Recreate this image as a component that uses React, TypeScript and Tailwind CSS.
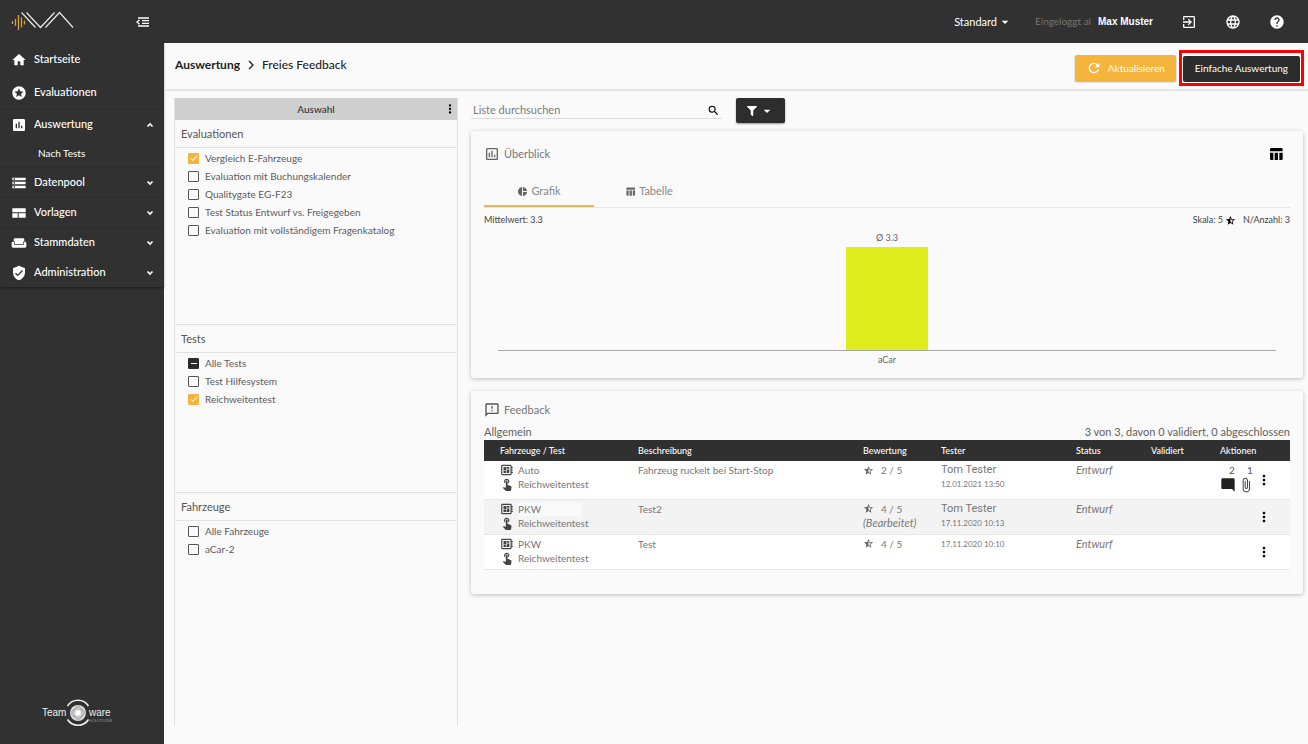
import { useEffect, useRef } from 'react';
import type { ReactNode } from 'react';
import type { IconType } from 'react-icons';
import {
  MdHome,
  MdStars,
  MdAssessment,
  MdStorage,
  MdWeekend,
  MdVerifiedUser,
  MdExitToApp,
  MdLanguage,
  MdHelp,
  MdRefresh,
  MdArrowDropDown,
  MdMoreVert,
  MdSearch,
  MdOutlineAssessment,
  MdPieChart,
  MdTableChart,
  MdOutlineFeedback,
  MdStarHalf,
  MdTouchApp,
  MdDeveloperBoard,
  MdModeComment,
  MdAttachFile,
  MdCheck,
} from 'react-icons/md';
import { FaFilter } from 'react-icons/fa';

type NavEntry = {
  label: string;
  icon: IconType;
  chevron?: 'up' | 'down';
  children?: string[];
};

const navEntries: NavEntry[] = [
  { label: 'Startseite', icon: MdHome },
  { label: 'Evaluationen', icon: MdStars },
  { label: 'Auswertung', icon: MdAssessment, chevron: 'up', children: ['Nach Tests'] },
  { label: 'Datenpool', icon: MdStorage, chevron: 'down' },
  { label: 'Vorlagen', icon: TemplateIcon, chevron: 'down' },
  { label: 'Stammdaten', icon: MdWeekend, chevron: 'down' },
  { label: 'Administration', icon: MdVerifiedUser, chevron: 'down' },
];

type Option = { label: string; state?: 'checked' | 'mixed' };

const evaluations: Option[] = [
  { label: 'Vergleich E-Fahrzeuge', state: 'checked' },
  { label: 'Evaluation mit Buchungskalender' },
  { label: 'Qualitygate EG-F23' },
  { label: 'Test Status Entwurf vs. Freigegeben' },
  { label: 'Evaluation mit vollständigem Fragenkatalog' },
];

const tests: Option[] = [
  { label: 'Alle Tests', state: 'mixed' },
  { label: 'Test Hilfesystem' },
  { label: 'Reichweitentest', state: 'checked' },
];

const vehicles: Option[] = [{ label: 'Alle Fahrzeuge' }, { label: 'aCar-2' }];

const feedback = [
  {
    vehicle: 'Auto',
    test: 'Reichweitentest',
    text: 'Fahrzeug ruckelt bei Start-Stop',
    rating: '2 / 5',
    edited: false,
    tester: 'Tom Tester',
    date: '12.01.2021 13:50',
    status: 'Entwurf',
    comments: 2,
    files: 1,
  },
  {
    vehicle: 'PKW',
    test: 'Reichweitentest',
    text: 'Test2',
    rating: '4 / 5',
    edited: true,
    tester: 'Tom Tester',
    date: '17.11.2020 10:13',
    status: 'Entwurf',
    comments: 0,
    files: 0,
  },
  {
    vehicle: 'PKW',
    test: 'Reichweitentest',
    text: 'Test',
    rating: '4 / 5',
    edited: false,
    tester: '',
    date: '17.11.2020 10:10',
    status: 'Entwurf',
    comments: 0,
    files: 0,
  },
];

function TemplateIcon({ className }: { className?: string }) {
  return (
    <svg viewBox="0 0 24 24" fill="currentColor" className={className}>
      <path d="M2 5h20v6H2zM2 12.500h8v6.500H2zM11.500 12.500H22v6.500H11.500z" />
    </svg>
  );
}

function Chevron({ direction }: { direction: 'up' | 'down' }) {
  return (
    <svg viewBox="0 0 8 6" className="h-[6px] w-2" fill="none" stroke="currentColor" strokeWidth="1.7">
      <path d={direction === 'up' ? 'M1.5 4.5 4 2l2.5 2.5' : 'M1.5 1.5 4 4l2.5-2.5'} />
    </svg>
  );
}

function BrandLogo() {
  return (
    <svg viewBox="0 0 64 22" className="h-[22px] w-16" fill="none" aria-label="IVA">
      <g stroke="#e0a030" strokeWidth="1.3">
        <path d="M1.5 10v3M4.5 8v7M7.5 4v15M10.5 6.500v10M13.500 9.500v4" />
      </g>
      <g stroke="#e8e8e8" strokeWidth="1.2">
        <path d="M10.5 1.500 24.500 16.500" />
        <path d="M15.500 1.500 29.500 16.500 43.500 1.500" />
        <path d="M34.500 16.500 48.500 1.500 62 16.500" />
      </g>
    </svg>
  );
}

function CollapseIcon() {
  return (
    <svg viewBox="0 0 14 10" className="h-[10px] w-[14px]" fill="none" stroke="currentColor" strokeWidth="1.3">
      <path d="M2 1h11M6 3.700h7M6 6.300h7M2 9h11M3.500 3 1 5.100l2.500 2.100" />
    </svg>
  );
}

function VendorLogo() {
  return (
    <svg viewBox="0 0 72 28" className="h-7 w-[72px]" aria-label="Teamware Solutions">
      <g fill="#f0f0f0" fontFamily="'Liberation Sans Narrow', 'Liberation Sans', sans-serif" fontSize="10">
        <text x="0" y="17">Team</text>
        <text x="47" y="17">ware</text>
        <text x="47" y="23" fontSize="4" fill="#9a9a9a">SOLUTIONS</text>
      </g>
      <g fill="none" stroke="#f0f0f0" strokeWidth="1.6">
        <path d="M25.500 7a12.500 12.500 0 0 1 21 0M25.500 20.500a12.500 12.500 0 0 0 21 0" />
      </g>
      <circle cx="36" cy="14" r="8" fill="#dcdcdc" />
      <g fill="none" stroke="#8c8c8c" strokeWidth="0.5">
        <circle cx="36" cy="14" r="5.500" />
        <ellipse cx="36" cy="14" rx="7" ry="4" />
        <ellipse cx="36" cy="14" rx="4" ry="7" />
      </g>
      <circle cx="36" cy="14" r="2.500" fill="#fff" />
    </svg>
  );
}

function Sidebar() {
  return (
    <aside className="flex w-[164px] shrink-0 flex-col bg-[#313131] text-white">
      <div className="flex h-[43px] items-center justify-between pr-[14px] pl-[11px]">
        <BrandLogo />
        <button type="button" aria-label="Menü einklappen">
          <CollapseIcon />
        </button>
      </div>
      <nav className="shadow-[0_1px_2px_rgba(0,0,0,0.4)]">
        {navEntries.map((entry) => (
          <div key={entry.label} className={entry.chevron ? 'border-t border-[#2c2c2c]' : ''}>
            <a
              href="#"
              className={`flex items-center pr-[10px] pl-[11px] text-[11px] font-medium ${entry.chevron ? 'h-[29px]' : 'h-[33px]'}`}
            >
              <entry.icon className="size-4" />
              <span className="ml-[7px] flex-1">{entry.label}</span>
              {entry.chevron && <Chevron direction={entry.chevron} />}
            </a>
            {entry.children?.map((child) => (
              <a key={child} href="#" className="flex h-7 items-center pl-[38px] text-[10px]">
                {child}
              </a>
            ))}
          </div>
        ))}
      </nav>
      <div className="mt-auto flex justify-center pr-2 pb-[17px]">
        <VendorLogo />
      </div>
    </aside>
  );
}

function TopBar() {
  return (
    <header className="flex h-[43px] items-center justify-end bg-[#313131] pr-[23px] text-[11px] text-white">
      <div className="flex items-center">
        <select aria-label="Ansicht" className="field-sizing-content h-5 appearance-none bg-transparent leading-5">
          <option>Standard</option>
        </select>
        <MdArrowDropDown className="size-4" />
      </div>
      <span className="ml-[22px] text-[10px] text-[#757575]">Eingeloggt al</span>
      <span className="ml-[7px] font-['Liberation_Sans'] text-[10px] font-bold">Max Muster</span>
      <button type="button" aria-label="Abmelden" className="ml-7">
        <MdExitToApp className="size-4" />
      </button>
      <button type="button" aria-label="Sprache" className="ml-7">
        <MdLanguage className="size-4" />
      </button>
      <button type="button" aria-label="Hilfe" className="ml-7">
        <MdHelp className="size-4" />
      </button>
    </header>
  );
}

function PageHeader() {
  return (
    <div className="flex h-12 items-center justify-between border-b-2 border-[#e5e5e5] pr-1 pl-[11px]">
      <div className="flex items-center pb-[2px] text-xs text-[#222]">
        <a href="#" className="font-bold">Auswertung</a>
        <svg viewBox="0 0 6 10" className="mx-2 h-[10px] w-[6px]" fill="none" stroke="#222" strokeWidth="1.4">
          <path d="M1 1l4 4-4 4" />
        </svg>
        <span className="font-medium">Freies Feedback</span>
      </div>
      <div className="flex items-center gap-[3px] pt-1">
        <button
          type="button"
          className="flex h-[26px] items-center gap-[6px] rounded-[2px] bg-[#f5b43c] px-[11px] text-[10px] text-white shadow-[0_1px_2px_rgba(0,0,0,0.35)]"
        >
          <MdRefresh className="size-4" />
          Aktualisieren
        </button>
        <div className="border-[3px] border-[#f00] p-px">
          <button type="button" className="h-[26px] rounded-[2px] bg-[#2c2c2c] px-3 text-[10px] text-white">
            Einfache Auswertung
          </button>
        </div>
      </div>
    </div>
  );
}

function CheckRow({ option }: { option: Option }) {
  const ref = useRef<HTMLInputElement>(null);

  useEffect(() => {
    if (ref.current) ref.current.indeterminate = option.state === 'mixed';
  }, [option.state]);

  return (
    <label className="flex h-[18px] items-center gap-[6px] text-[10px] text-[#5c5c5c]">
      <span className="grid size-[11px] place-items-center">
        <input
          ref={ref}
          type="checkbox"
          defaultChecked={option.state === 'checked'}
          className="peer col-start-1 row-start-1 size-[11px] appearance-none rounded-[1px] border border-[#555] checked:border-[#f5b43c] checked:bg-[#f5b43c] indeterminate:border-[#2b2b2b] indeterminate:bg-[#2b2b2b]"
        />
        <MdCheck className="pointer-events-none col-start-1 row-start-1 hidden size-[10px] text-white peer-checked:block" />
        <span className="pointer-events-none col-start-1 row-start-1 hidden h-px w-[6px] bg-white peer-indeterminate:block" />
      </span>
      {option.label}
    </label>
  );
}

function FilterSection({ title, options, className }: { title: string; options: Option[]; className: string }) {
  return (
    <section className={className}>
      <h2 className="h-7 border-b border-[#e2e2e2] px-[6px] text-[11px] leading-[27px] text-[#555]">{title}</h2>
      <div className="px-[13px] pt-px">
        {options.map((option) => (
          <CheckRow key={option.label} option={option} />
        ))}
      </div>
    </section>
  );
}

function SelectionPanel() {
  return (
    <div className="flex w-[284px] shrink-0 flex-col border-x border-[#e2e2e2]">
      <div className="flex h-[22px] items-center bg-[#cfcfcf] text-[10px] text-[#333]">
        <span className="flex-1 pl-[14px] text-center font-medium">Auswahl</span>
        <button type="button" aria-label="Auswahl Optionen" className="text-black">
          <MdMoreVert className="size-[14px]" />
        </button>
      </div>
      <FilterSection title="Evaluationen" options={evaluations} className="h-[204px]" />
      <FilterSection title="Tests" options={tests} className="h-[168px] border-t border-[#e2e2e2]" />
      <FilterSection title="Fahrzeuge" options={vehicles} className="flex-1 border-t border-[#e2e2e2]" />
    </div>
  );
}

function SearchRow() {
  return (
    <div className="flex h-[26px] items-start gap-[14px]">
      <div className="flex h-[21px] w-[251px] items-center border-b border-[#dcdcdc] pt-1 pr-[2px] pl-[2px]">
        <input
          type="text"
          aria-label="Liste durchsuchen"
          placeholder="Liste durchsuchen"
          className="h-4 min-w-0 flex-1 bg-transparent text-[11px] leading-4 outline-none placeholder:text-[#7a7a7a]"
        />
        <MdSearch className="size-[13px] text-black" />
      </div>
      <button
        type="button"
        aria-label="Filter"
        className="flex h-[25px] w-[49px] items-center justify-center gap-[2px] rounded-[2px] bg-[#2d2d2d] text-white shadow-[0_1px_2px_rgba(0,0,0,0.4)]"
      >
        <FaFilter className="size-[10px]" />
        <MdArrowDropDown className="size-4" />
      </button>
    </div>
  );
}

function Card({ children }: { children: ReactNode }) {
  return (
    <section className="rounded-[3px] bg-[#fafafa] px-[13px] shadow-[0_1px_4px_rgba(0,0,0,0.25)]">{children}</section>
  );
}

function OverviewCard() {
  return (
    <Card>
      <div className="flex h-[46px] items-center pr-[6px]">
        <MdOutlineAssessment className="size-4 text-[#666]" />
        <h2 className="ml-1 flex-1 text-[11px] text-[#777]">Überblick</h2>
        <button type="button" aria-label="Spalten" className="text-black">
          <MdTableChart className="size-4" />
        </button>
      </div>
      <div role="tablist" className="flex h-[31px] border-b border-[#e5e5e5] text-[11px] text-[#888]">
        <button
          type="button"
          role="tab"
          aria-selected="true"
          className="flex h-[30px] w-[110px] items-center justify-center gap-[3px] border-b-2 border-[#e5b75c]"
        >
          <MdPieChart className="size-[11px] text-[#666]" />
          Grafik
        </button>
        <button
          type="button"
          role="tab"
          aria-selected="false"
          className="flex h-7 w-[110px] items-center justify-center gap-[3px]"
        >
          <MdTableChart className="size-[11px] text-[#666]" />
          Tabelle
        </button>
      </div>
      <div className="flex h-6 items-center text-[9px] text-[#444]">
        <span className="flex-1">Mittelwert: 3.3</span>
        <span>Skala: 5</span>
        <MdStarHalf className="mr-[7px] ml-[2px] size-[11px] text-black" />
        <span>N/Anzahl: 3</span>
      </div>
      <div className="px-[14px] pb-3 text-[9px] leading-3 text-[#666]">
        <div className="flex h-[119px] flex-col items-center justify-end border-b border-[#aaa]">
          <span className="mb-[3px]">Ø 3.3</span>
          <div className="h-[103px] w-[82px] bg-[#dfed1c]" />
        </div>
        <div className="pt-[3px] text-center">aCar</div>
      </div>
    </Card>
  );
}

function FeedbackCard() {
  return (
    <Card>
      <div className="flex h-9 items-center pt-[2px]">
        <MdOutlineFeedback className="size-4 text-[#555]" />
        <h2 className="ml-1 text-[11px] text-[#777]">Feedback</h2>
      </div>
      <div className="flex h-[13px] items-start justify-between text-[11px] leading-[9px] text-[#5f5f5f]">
        <span>Allgemein</span>
        <span>3 von 3, davon 0 validiert, 0 abgeschlossen</span>
      </div>
      <table className="mb-6 w-full table-fixed text-left text-[10px] leading-[14px] text-[#777]">
        <thead className="bg-[#303030] text-[9px] text-white">
          <tr className="h-[21px]">
            <th className="w-[154px] pl-4 font-medium">Fahrzeuge / Test</th>
            <th className="font-medium">Beschreibung</th>
            <th className="w-[78px] font-medium">Bewertung</th>
            <th className="w-[135px] font-medium">Tester</th>
            <th className="w-[75px] font-medium">Status</th>
            <th className="w-[69px] font-medium">Validiert</th>
            <th className="w-[70px] font-medium">Aktionen</th>
          </tr>
        </thead>
        <tbody>
          {feedback.map((row, index) => (
            <tr
              key={row.date}
              className={`border-b border-[#e6e6e6] align-top ${index === 0 ? 'h-[38px]' : 'h-[35px]'} ${index % 2 ? 'bg-[#f3f3f3]' : 'bg-white'}`}
            >
              <td className="pt-[2px] pl-4">
                <div className="flex items-center gap-1">
                  <MdDeveloperBoard className="size-[14px] text-[#444]" />
                  <span className={index === 1 ? 'w-16 bg-[#f9f9f9]' : ''}>{row.vehicle}</span>
                </div>
                <div className="flex items-center gap-1">
                  <MdTouchApp className="size-[14px] text-[#444]" />
                  {row.test}
                </div>
              </td>
              <td className="pt-[2px]">{row.text}</td>
              <td className="pt-[2px]">
                <div className="flex items-center gap-[7px]">
                  <MdStarHalf className="size-[11px] text-[#666]" />
                  {row.rating}
                </div>
                {row.edited && <em className="text-[11px]">(Bearbeitet)</em>}
              </td>
              <td className="pt-[2px]">
                {row.tester && <div className="font-[Roboto] text-[11px]">{row.tester}</div>}
                <div className="text-[8px]">{row.date}</div>
              </td>
              <td className="pt-[2px] text-[11px] italic">{row.status}</td>
              <td />
              <td className="align-middle">
                <div className="flex items-center">
                  <div className="flex w-9 gap-[2px]">
                    {row.comments > 0 && (
                      <button type="button" aria-label="Kommentare" className="flex flex-col items-center pb-1 text-[#555]">
                        <span className="pl-2">{row.comments}</span>
                        <MdModeComment className="size-4 text-[#222]" />
                      </button>
                    )}
                    {row.files > 0 && (
                      <button type="button" aria-label="Anhänge" className="flex flex-col items-center pb-1 text-[#555]">
                        <span className="pl-2">{row.files}</span>
                        <MdAttachFile className="size-4 text-[#444]" />
                      </button>
                    )}
                  </div>
                  <button type="button" aria-label="Weitere Aktionen" className="text-black">
                    <MdMoreVert className="size-4" />
                  </button>
                </div>
              </td>
            </tr>
          ))}
        </tbody>
      </table>
    </Card>
  );
}

export default function App() {
  return (
    <div className="flex min-h-screen bg-[#fafafa] font-[Lato,sans-serif]">
      <Sidebar />
      <div className="flex min-w-0 flex-1 flex-col">
        <TopBar />
        <PageHeader />
        <main className="flex flex-1 gap-[13px] pt-[7px] pr-[5px] pb-[18px] pl-[10px]">
          <SelectionPanel />
          <div className="flex min-w-0 flex-1 flex-col">
            <SearchRow />
            <div className="mt-[7px] flex flex-col gap-[13px]">
              <OverviewCard />
              <FeedbackCard />
            </div>
          </div>
        </main>
      </div>
    </div>
  );
}
